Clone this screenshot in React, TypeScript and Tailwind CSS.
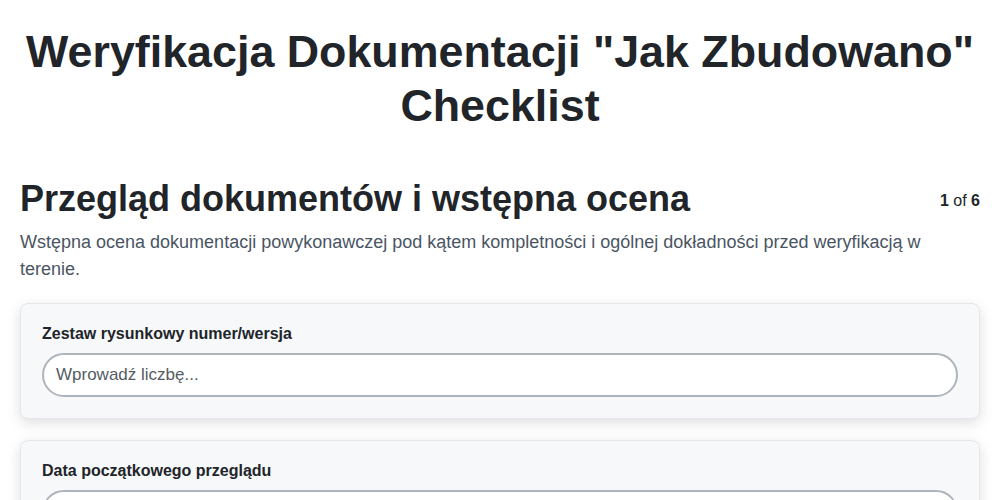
import React from "react";

function Field({ label, placeholder }: { label: string; placeholder: string }) {
  return (
    <div className="mb-[21px] rounded-lg border border-[#e5e7eb] bg-[#f7f8fa] px-[21px] pt-5 pb-[21px] shadow-[0_4px_14px_rgba(0,0,0,0.13)]">
      <label className="mb-2.5 block text-[16px] font-bold leading-[1.2] text-[#212529]">{label}</label>
      <input
        type="text"
        placeholder={placeholder}
        className="block h-[44px] w-full rounded-full border-2 border-[#adb4bc] bg-white px-3 text-[17px] text-[#212529] outline-none placeholder:text-[#555b62]"
      />
    </div>
  );
}

export default function App() {
  return (
    <div className="min-h-screen bg-white px-5 pt-[25px] text-[#212529]" style={{ fontFamily: '"Liberation Sans", Arial, sans-serif' }}>
      <h1 className="text-center text-[44.8px] font-bold leading-[1.2]">
        Weryfikacja Dokumentacji "Jak Zbudowano" Checklist
      </h1>
      <div className="mt-[44px] flex items-start justify-between">
        <h2 className="text-[36px] font-bold leading-[1.2]">Przegląd dokumentów i wstępna ocena</h2>
        <div className="pt-[14px] text-[16px] leading-[1.2]">
          <span className="font-bold">1</span> of <span className="font-bold">6</span>
        </div>
      </div>
      <p className="mt-[9px] mb-[20px] text-[18px] leading-[1.5] text-[#4a5563]">
        Wstępna ocena dokumentacji powykonawczej pod kątem kompletności i ogólnej dokładności przed weryfikacją w terenie.
      </p>
      <Field label="Zestaw rysunkowy numer/wersja" placeholder="Wprowadź liczbę..." />
      <Field label="Data początkowego przeglądu" placeholder="" />
    </div>
  );
}
